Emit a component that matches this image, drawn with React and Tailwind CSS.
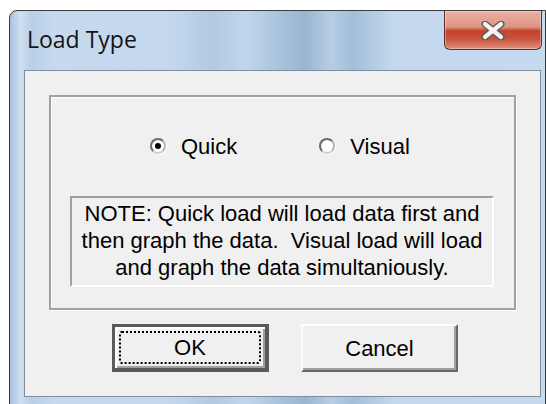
// Load Type dialog, Windows 7 Aero frame around a classic dialog body
function Radio({ checked, label }) {
  return (
    <label className="flex items-center gap-[15px]">
      <span className="flex h-[16px] w-[16px] items-center justify-center rounded-full border-2 border-t-[#6a6a6a] border-l-[#6a6a6a] border-r-[#b4b4b4] border-b-[#d0d0d0] bg-white shadow-[1px_1px_0_#ffffff]">
        {checked && <span className="h-[6px] w-[6px] rounded-full bg-black" />}
      </span>
      <span>{label}</span>
    </label>
  );
}

function CloseButton() {
  return (
    <div className="flex h-[39px] w-[98px] items-center justify-center rounded-b-[6px] border border-t-0 border-[#5e2f27] bg-[linear-gradient(to_bottom,#eab0a2_0%,#de9483_42%,#c4432a_52%,#c9513a_72%,#dd8f7c_100%)] shadow-[inset_0_0_0_1px_rgba(255,255,255,0.35)]">
      <svg width="24" height="19" viewBox="0 0 24 19">
        <path d="M4 3 L20 16 M20 3 L4 16" stroke="#5b5b5b" strokeWidth="7" strokeLinecap="round" />
        <path d="M4 3 L20 16 M20 3 L4 16" stroke="#f4f4f4" strokeWidth="4.2" strokeLinecap="round" />
      </svg>
    </div>
  );
}

export default function App() {
  return (
    <div className="h-[404px] w-[546px] overflow-hidden bg-white pl-[9px] pt-[10px]">
      <div className="flex h-[400px] w-[537px] flex-col rounded-tl-[8px] border border-[#3c3c3c] bg-[linear-gradient(to_right,#a9c3de_0%,#cfe0f1_2%,#b8cfe7_4%,#c6daee_8%,#c3d8ed_30%,#b2c9e2_38%,#c0d6ec_44%,#98b5d2_55%,#b7cde4_60%,#a3bedb_64%,#c4d9ee_72%,#c6daee_100%)]">
        {/* title bar */}
        <div className="flex h-[59px] items-start justify-between">
          <span className="ml-[17px] mt-[17px] font-['Open_Sans',sans-serif] text-[23px] leading-none text-[#141414]">
            Load Type
          </span>
          <div className="mr-[3px]">
            <CloseButton />
          </div>
        </div>

        {/* client area */}
        <div className="ml-[14px] mr-[4px] flex h-[327px] flex-col border border-[#7f8d9c] bg-[#f0f0f0] font-['Liberation_Sans',Arial,sans-serif] text-[22px] text-black">
          <div className="ml-[24px] mt-[24px] h-[215px] w-[467px] border-2 border-[#a0a0a0] shadow-[1px_1px_0_#ffffff,inset_1px_1px_0_#ffffff]">
            <div className="ml-[99px] mt-[39px] flex h-[20px] items-center gap-[82px]">
              <Radio checked label="Quick" />
              <Radio label="Visual" />
            </div>
            <div className="ml-[19px] mt-[40px] flex h-[91px] w-[424px] flex-col items-center justify-center border-2 border-t-[#a0a0a0] border-l-[#a0a0a0] border-r-white border-b-white pb-[2px] text-center leading-[27px]">
              <span>NOTE: Quick load will load data first and</span>
              <span>then graph the data.&nbsp; Visual load will load</span>
              <span>and graph the data simultaniously.</span>
            </div>
          </div>

          <div className="ml-[87px] mt-[14px] flex gap-[32px]">
            <button className="flex h-[48px] w-[157px] items-center justify-center border-[3px] border-b-[4px] border-r-[4px] border-[#5a5a5a] bg-[#f0f0f0] p-[4px] shadow-[inset_2px_2px_0_#ffffff,inset_-2px_-2px_0_#a0a0a0]">
              <span className="flex h-full w-full items-center justify-center rounded-[3px] border-2 border-dotted border-black">
                OK
              </span>
            </button>
            <button className="flex h-[48px] w-[157px] items-center justify-center border-2 border-t-white border-l-white border-r-[#696969] border-b-[#696969] bg-[#f0f0f0] shadow-[inset_-2px_-2px_0_#a0a0a0]">
              Cancel
            </button>
          </div>
        </div>
      </div>
    </div>
  );
}
